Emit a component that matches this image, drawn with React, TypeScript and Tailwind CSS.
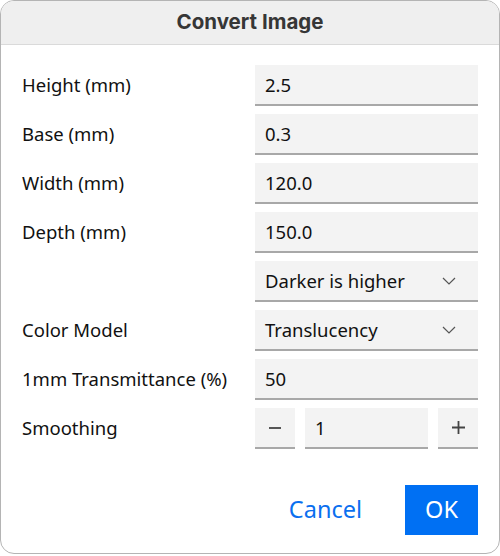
import React from 'react';

const labelFont = { fontFamily: '"Noto Sans", "Open Sans", sans-serif' };

const Field: React.FC<{ value: string; select?: boolean }> = ({ value, select }) => (
    <div className="h-[41px] bg-[#f3f3f3] border-b-2 border-[#a8a8a8] flex items-center justify-between pl-[10px] pr-[22px] text-[18.5px] text-[#111]">
        <span>{value}</span>
        {select && (
            <svg width="14" height="8" viewBox="0 0 14 8" fill="none" stroke="#555" strokeWidth="1.2">
                <path d="M1 1l6 6 6-6" />
            </svg>
        )}
    </div>
);

const StepButton: React.FC<{ children: React.ReactNode }> = ({ children }) => (
    <div className="w-[40px] h-[41px] bg-[#f3f3f3] border-b-2 border-[#a8a8a8] flex items-center justify-center text-[#222]">
        {children}
    </div>
);

export default function App() {
    const rows: { label: string; value: string; select?: boolean }[] = [
        { label: 'Height (mm)', value: '2.5' },
        { label: 'Base (mm)', value: '0.3' },
        { label: 'Width (mm)', value: '120.0' },
        { label: 'Depth (mm)', value: '150.0' },
        { label: '', value: 'Darker is higher', select: true },
        { label: 'Color Model', value: 'Translucency', select: true },
        { label: '1mm Transmittance (%)', value: '50' },
    ];

    return (
        <div className="w-[500px] h-[556px] bg-white" style={labelFont}>
            <div className="h-[554px] border border-[#b4b4b4] rounded-[14px] overflow-hidden flex flex-col">
                <div className="h-[44px] shrink-0 bg-[#efefef] border-b border-[#dadada] flex items-center justify-center">
                    <h1 className="text-[20.5px] font-bold text-[#363636]" style={{ fontFamily: 'Inter, "Liberation Sans", sans-serif' }}>
                        Convert Image
                    </h1>
                </div>

                <div className="pt-[20px] pl-[21px] pr-[21px] grid grid-cols-[233px_1fr] gap-y-[8px] items-center">
                    {rows.map((row, i) => (
                        <React.Fragment key={i}>
                            <div className="text-[18.5px] text-[#111] -mt-[2px]">{row.label}</div>
                            <Field value={row.value} select={row.select} />
                        </React.Fragment>
                    ))}
                    <div className="text-[18.5px] text-[#111] -mt-[2px]">Smoothing</div>
                    <div className="flex gap-[10px]">
                        <StepButton>
                            <svg width="12" height="2" viewBox="0 0 12 2"><path d="M0 1h12" stroke="#444" strokeWidth="1.8" /></svg>
                        </StepButton>
                        <div className="flex-1">
                            <Field value="1" />
                        </div>
                        <StepButton>
                            <svg width="13" height="13" viewBox="0 0 13 13"><path d="M0 6.5h13M6.5 0v13" stroke="#444" strokeWidth="1.8" /></svg>
                        </StepButton>
                    </div>
                </div>

                <div className="mt-[36px] pr-[21px] flex justify-end items-center gap-[31px]">
                    <button className="h-[50px] px-[12px] text-[23.5px] text-[#0a6fef]">Cancel</button>
                    <button className="h-[50px] w-[73px] bg-[#0070f3] text-[23.5px] text-white">OK</button>
                </div>
            </div>
        </div>
    );
}
